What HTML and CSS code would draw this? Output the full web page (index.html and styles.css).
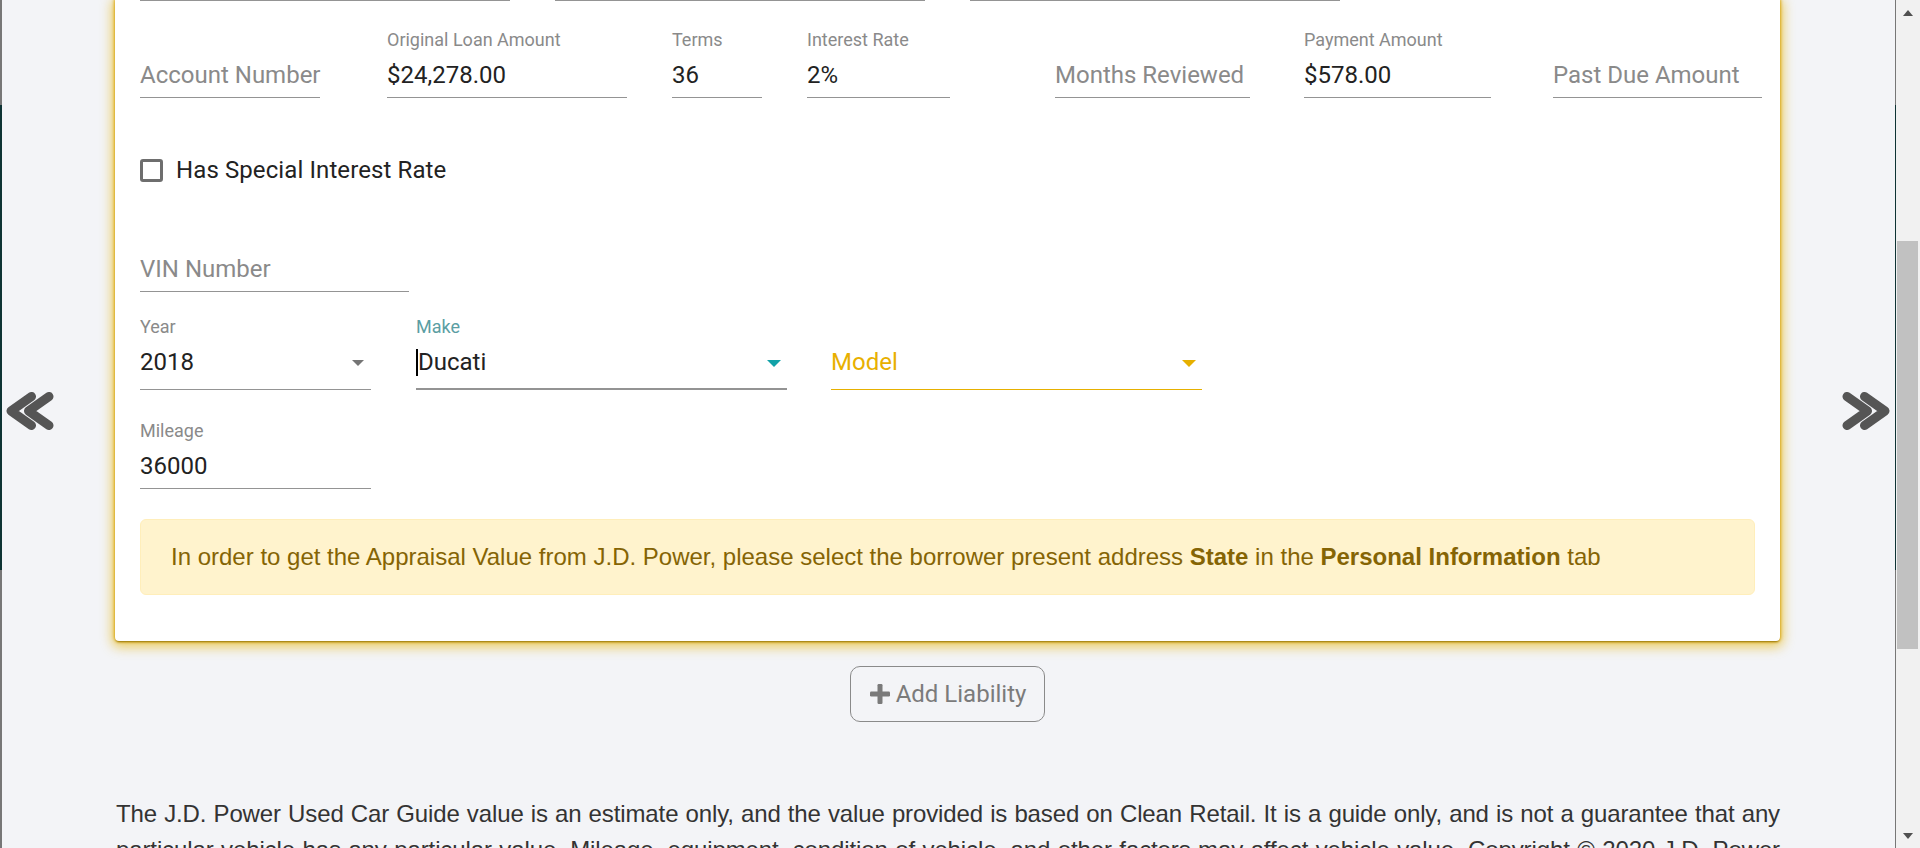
FILE: index.html
```html
<!DOCTYPE html>
<html lang="en">
<head>
<meta charset="utf-8">
<title>Liabilities</title>
<link rel="stylesheet" href="styles.css">
</head>
<body>
<div class="app">
  <div class="edge"></div>
  <aside class="nav nav-left">
    <svg class="chev" width="48" height="38" viewBox="0 0 48 38" aria-hidden="true"><path d="M25.5 4.5 L5 19 L25.5 33.5 M43 4.5 L22.5 19 L43 33.5" fill="none" stroke="#555" stroke-width="9" stroke-linecap="round" stroke-linejoin="round"/></svg>
  </aside>
  <main class="main">
    <section class="card">
      <div class="row row-top">
        <span class="line"></span><span class="line"></span><span class="line"></span>
      </div>
      <div class="row row-loan">
        <div class="field f-account"><div class="label"></div><div class="input placeholder">Account Number</div></div>
        <div class="field f-orig"><div class="label">Original Loan Amount</div><div class="input">$24,278.00</div></div>
        <div class="field f-terms"><div class="label">Terms</div><div class="input">36</div></div>
        <div class="field f-rate"><div class="label">Interest Rate</div><div class="input">2%</div></div>
        <div class="field f-months"><div class="label"></div><div class="input placeholder">Months Reviewed</div></div>
        <div class="field f-payment"><div class="label">Payment Amount</div><div class="input">$578.00</div></div>
        <div class="field f-pastdue"><div class="label"></div><div class="input placeholder">Past Due Amount</div></div>
      </div>
      <label class="row row-check">
        <span class="checkbox"></span>
        <span class="check-text">Has Special Interest Rate</span>
      </label>
      <div class="row row-vin">
        <div class="field f-vin"><div class="label"></div><div class="input placeholder">VIN Number</div></div>
      </div>
      <div class="row row-vehicle">
        <div class="field select f-year"><div class="label">Year</div><div class="input"><span>2018</span><span class="arrow"></span></div></div>
        <div class="field select f-make"><div class="label label-focus">Make</div><div class="input make"><span><span class="caret"></span>Ducati</span><span class="arrow arrow-teal"></span></div></div>
        <div class="field select f-model"><div class="label"></div><div class="input model"><span>Model</span><span class="arrow arrow-gold"></span></div></div>
      </div>
      <div class="row row-mileage">
        <div class="field f-mileage"><div class="label">Mileage</div><div class="input">36000</div></div>
      </div>
      <div class="alert">In order to get the Appraisal Value from J.D. Power, please select the borrower present address <b>State</b> in the <b>Personal Information</b> tab</div>
    </section>
    <div class="actions">
      <button class="btn" type="button">
        <svg width="22" height="22" viewBox="0 0 22 22" aria-hidden="true"><rect x="8.5" y="1" width="5" height="20" rx="1.2" fill="#7a7a7a"/><rect x="1" y="8.5" width="20" height="5" rx="1.2" fill="#7a7a7a"/></svg>
        <span>Add Liability</span>
      </button>
    </div>
    <p class="disclaimer">The J.D. Power Used Car Guide value is an estimate only, and the value provided is based on Clean Retail. It is a guide only, and is not a guarantee that any particular vehicle has any particular value. Mileage, equipment, condition of vehicle, and other factors may affect vehicle value. Copyright © 2020 J.D. Power</p>
  </main>
  <aside class="nav nav-right">
    <svg class="chev" width="48" height="38" viewBox="0 0 48 38" aria-hidden="true"><path d="M22.5 4.5 L43 19 L22.5 33.5 M5 4.5 L25.5 19 L5 33.5" fill="none" stroke="#555" stroke-width="9" stroke-linecap="round" stroke-linejoin="round"/></svg>
  </aside>
  <div class="edge edge-right"></div>
  <div class="scrollbar">
    <div class="sb-btn"><span class="tri-up"></span></div>
    <div class="sb-track"><div class="sb-thumb"></div></div>
    <div class="sb-btn"><span class="tri-down"></span></div>
  </div>
</div>
</body>
</html>
```
FILE: styles.css
```css
* { box-sizing: border-box; }
html, body { margin: 0; height: 100%; }
body {
  background: #f3f4f7;
  font-family: Roboto, "Liberation Sans", Arial, sans-serif;
  overflow: hidden;
}
.app { display: flex; height: 848px; overflow: hidden; }

.edge {
  width: 2px; flex: none;
  background: linear-gradient(to bottom, #777 0, #777 105px, #0e3334 105px, #0e3334 570px, #777 570px);
}
.edge-right { width: 1px; }

.nav { flex: none; padding-top: 392px; }
.nav-left { width: 113px; padding-left: 4px; }
.nav-right { width: 115px; padding-left: 62px; }
.chev { display: block; }

.main { width: 1665px; flex: none; }

.card {
  background: #fff;
  border-radius: 0 0 4px 4px;
  box-shadow: 0 2px 2px -1px #9a7a0e, 0 0 3px 1px rgba(222, 172, 20, 0.95), 0 3px 12px 3px rgba(232, 186, 30, 0.7);
  padding: 0 25px 46px 25px;
}

.row { display: flex; }
.row-top { gap: 45px; }
.line { display: block; width: 370px; height: 1px; background: #949494; }

.row-loan { margin-top: 28px; }
.row-check { margin-top: 49px; height: 46px; align-items: center; }
.row-vin { margin-top: 30px; }
.row-vehicle { margin-top: 24px; }
.row-mileage { margin-top: 30px; }

.field { display: flex; flex-direction: column; flex: none; }
.label {
  height: 21px; line-height: 21px; font-size: 18px;
  color: #8a8a8a; margin-bottom: 11px; white-space: nowrap;
}
.label-focus { color: #5b9ea3; }
.input {
  height: 37px; line-height: 28px; font-size: 24px; color: #222;
  padding-bottom: 8px; border-bottom: 1px solid #949494; white-space: nowrap;
}
.placeholder { color: #8a8a8a; }

.f-account { width: 180px; }
.f-orig { width: 240px; margin-left: 67px; }
.f-terms { width: 90px; margin-left: 45px; }
.f-rate { width: 143px; margin-left: 45px; }
.f-months { width: 195px; margin-left: 105px; }
.f-payment { width: 187px; margin-left: 54px; }
.f-pastdue { width: 209px; margin-left: 62px; }

.f-vin { width: 269px; }
.f-year { width: 231px; }
.f-make { width: 371px; margin-left: 45px; }
.f-model { width: 371px; margin-left: 44px; }
.f-mileage { width: 231px; }

.select .input {
  height: 42px; padding-bottom: 13px;
  display: flex; justify-content: space-between; align-items: flex-start;
}
.select .input.make { border-bottom: 2px solid #939393; padding-bottom: 12px; }
.select .input.model { color: #e8b000; border-bottom-color: #e6b000; }

.arrow {
  margin-top: 12px; margin-right: 7px;
  width: 0; height: 0;
  border-left: 6px solid transparent; border-right: 6px solid transparent;
  border-top: 6px solid #757575;
}
.arrow-teal, .arrow-gold {
  margin-right: 6px;
  border-left-width: 7px; border-right-width: 7px; border-top-width: 7px;
}
.arrow-teal { border-top-color: #12a2a8; }
.arrow-gold { border-top-color: #e6b000; }

.caret {
  display: inline-block; width: 2px; height: 27px; background: #000;
  vertical-align: -6px;
}

.checkbox {
  width: 23px; height: 23px; flex: none;
  border: 3px solid #6e6e6e; border-radius: 3px;
}
.check-text { margin-left: 13px; font-size: 24px; color: #222; line-height: 28px; letter-spacing: 0.1px; }

.alert {
  margin-top: 30px;
  height: 76px;
  padding: 19px 30px;
  background: #fff3cd;
  border: 1px solid #ffeeba;
  border-radius: 6px;
  color: #856404;
  font-family: "Liberation Sans", Arial, sans-serif;
  font-size: 24px; line-height: 36px;
  white-space: nowrap;
}
.alert b { font-weight: bold; }

.actions { display: flex; justify-content: center; margin-top: 25px; }
.btn {
  height: 56px; padding: 0 18px;
  display: flex; align-items: center; gap: 5px;
  border: 1px solid #8a8a8a; border-radius: 10px;
  background: transparent; color: #7b7b7b;
  font-family: Roboto, "Liberation Sans", sans-serif; font-size: 24px;
}
.btn svg { display: block; }

.disclaimer {
  margin: 74px 0 0 1px;
  font-family: "Liberation Sans", Arial, sans-serif;
  font-size: 24px; line-height: 36px; color: #333;
  text-align: justify;
  text-align-last: justify;
  letter-spacing: -0.12px;
  word-spacing: -1px;
}

.scrollbar {
  width: 24px; flex: none;
  display: flex; flex-direction: column;
  background: #f1f1f1;
}
.sb-btn { height: 25px; flex: none; display: flex; align-items: center; justify-content: center; }
.tri-up { width: 0; height: 0; border-left: 5px solid transparent; border-right: 5px solid transparent; border-bottom: 6px solid #505050; }
.tri-down { width: 0; height: 0; border-left: 5px solid transparent; border-right: 5px solid transparent; border-top: 6px solid #505050; }
.sb-track { flex: 1; }
.sb-thumb { margin: 216px 2px 0 1px; height: 408px; background: #c1c1c1; }
```
